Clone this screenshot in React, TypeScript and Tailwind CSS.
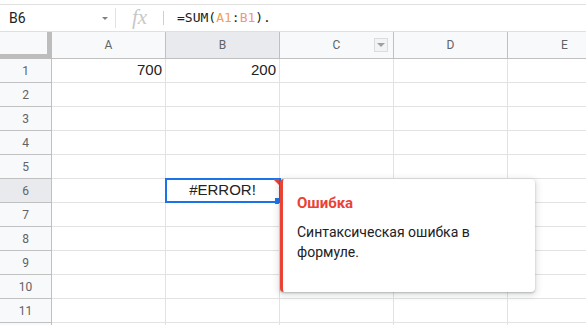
import React from "react";

const cols = ["A", "B", "C", "D", "E"];
const rows = [1, 2, 3, 4, 5, 6, 7, 8, 9, 10, 11, 12];

function Cell({ col, row }: { col: string; row: number }) {
  let content: React.ReactNode = null;
  if (row === 1 && col === "A") content = <span className="ml-auto pr-[3px]">700</span>;
  if (row === 1 && col === "B") content = <span className="ml-auto pr-[3px]">200</span>;
  const selected = row === 6 && col === "B";
  return (
    <div className="relative w-[114px] shrink-0 h-full border-r border-b border-[#e2e2e2] flex items-center text-[15px] text-[#222] font-['Liberation_Sans',Arial,sans-serif]">
      {content}
      {selected && (
        <>
          <span className="w-full text-center">#ERROR!</span>
          <div className="absolute -left-px -top-px w-[116px] h-[25px] border-2 border-[#1a73e8]" />
          <div className="absolute right-0 top-0 w-0 h-0 border-t-[6px] border-t-[#ea4335] border-l-[6px] border-l-transparent" />
          <div className="absolute right-[-2px] bottom-[-2px] w-[6px] h-[6px] bg-[#1a73e8]" />
        </>
      )}
    </div>
  );
}

export default function App() {
  return (
    <div className="relative w-[586px] h-[325px] overflow-hidden bg-white font-['Roboto',sans-serif]">
      <div className="h-[4px]" />
      {/* formula bar */}
      <div className="h-[28px] border-t border-b border-[#e0e0e0] flex items-center">
        <div className="w-[115px] flex items-center pl-[9px] text-[14px] text-[#202124]">
          <span>B6</span>
          <svg className="ml-auto mr-[7px]" width="6" height="3" viewBox="0 0 6 3">
            <path d="M0 0 L6 0 L3 3 Z" fill="#808080" />
          </svg>
        </div>
        <div className="w-px h-[20px] bg-[#e3e3e3]" />
        <div className="w-[47px] flex justify-center items-center">
          <span className="font-['Liberation_Serif',serif] italic text-[21px] leading-none text-[#c8c8c8] -mt-[2px]">fx</span>
        </div>
        <div className="w-px h-[14px] bg-[#cfcfcf]" />
        <div className="pl-[13px] text-[13px] text-[#202124] font-['DejaVu_Sans_Mono',monospace]">
          =SUM(<span className="text-[#f5a052]">A1</span>:<span className="text-[#f2938a]">B1</span>).
        </div>
      </div>
      {/* column header */}
      <div className="flex h-[27px]">
        <div className="w-[52px] shrink-0 bg-[#f8f9fa] border-r-[5px] border-b-[5px] border-[#bdbdbd]" />
        {cols.map((c) => (
          <div
            key={c}
            className={`relative w-[114px] shrink-0 border-r border-b border-[#c0c0c0] flex items-center justify-center text-[12px] text-[#5f6368] ${c === "B" ? "bg-[#e8eaed]" : "bg-[#f8f9fa]"}`}
          >
            {c}
            {c === "C" && (
              <div className="absolute right-[5px] top-[6px] w-[14px] h-[14px] border border-[#dadce0] bg-[#f1f3f4] flex items-center justify-center">
                <svg width="8" height="4" viewBox="0 0 8 4">
                  <path d="M0 0 L8 0 L4 4 Z" fill="#a0a0a0" />
                </svg>
              </div>
            )}
          </div>
        ))}
      </div>
      {/* rows */}
      {rows.map((r) => (
        <div key={r} className="flex h-[24px]">
          <div
            className={`w-[52px] shrink-0 border-r border-b border-[#c0c0c0] flex items-center justify-center text-[12px] text-[#5f6368] ${r === 6 ? "bg-[#e8eaed]" : "bg-[#f8f9fa]"}`}
          >
            {r <= 11 ? r : null}
          </div>
          {cols.map((c) => (
            <Cell key={c} col={c} row={r} />
          ))}
        </div>
      ))}
      {/* error tooltip */}
      <div className="absolute left-[280px] top-[179px] w-[255px] h-[113px] bg-white rounded-[4px] border-l-[3px] border-[#ea4335] shadow-[0_2px_6px_2px_rgba(60,64,67,0.15),0_1px_2px_rgba(60,64,67,0.3)] pl-[14px] pt-[14px]">
        <div className="text-[15px] font-bold text-[#ea4335] leading-[20px]">Ошибка</div>
        <div className="mt-[9px] text-[14px] text-[#202124] leading-[20px] pr-[20px]">
          Синтаксическая ошибка в формуле.
        </div>
      </div>
    </div>
  );
}
